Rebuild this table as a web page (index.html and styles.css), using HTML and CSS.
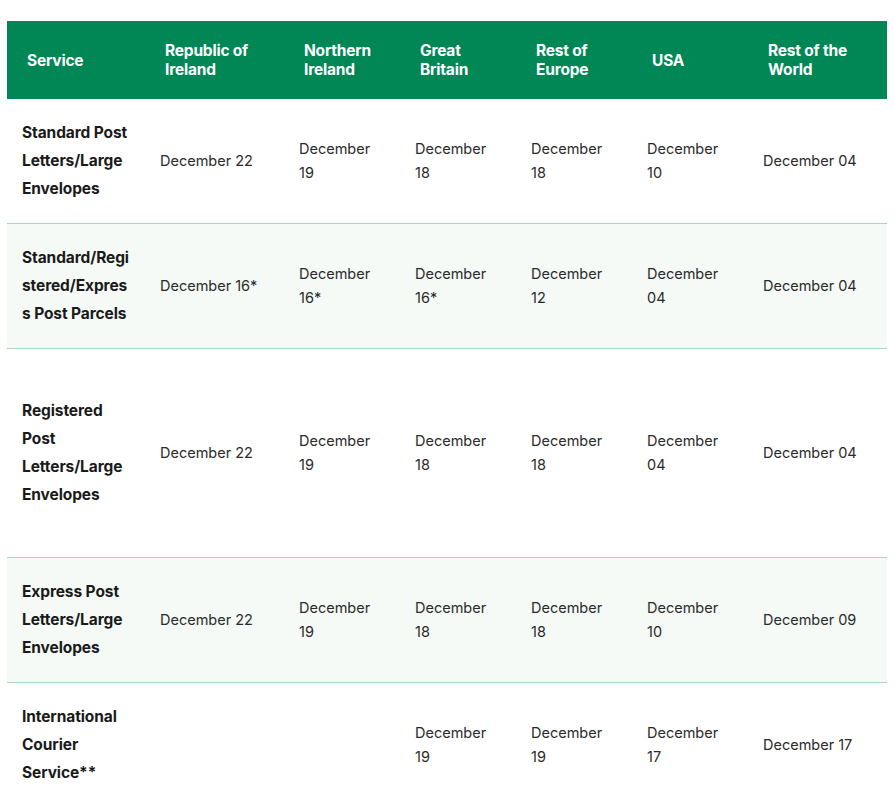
FILE: index.html
```html
<!DOCTYPE html>
<html lang="en">
<head>
<meta charset="utf-8">
<title>Christmas Posting Dates</title>
<link rel="stylesheet" href="styles.css">
</head>
<body>
<div class="wrap">
<table class="dates">
  <colgroup>
    <col class="c-service">
    <col class="c-wide">
    <col class="c-narrow">
    <col class="c-narrow">
    <col class="c-narrow">
    <col class="c-narrow">
    <col class="c-last">
  </colgroup>
  <thead>
    <tr>
      <th>Service</th>
      <th>Republic of Ireland</th>
      <th>Northern Ireland</th>
      <th>Great Britain</th>
      <th>Rest of Europe</th>
      <th>USA</th>
      <th>Rest of the World</th>
    </tr>
  </thead>
  <tbody>
    <tr>
      <td class="svc">Standard Post Letters/Large Envelopes</td>
      <td>December 22</td>
      <td>December 19</td>
      <td>December 18</td>
      <td>December 18</td>
      <td>December 10</td>
      <td>December 04</td>
    </tr>
    <tr class="alt">
      <td class="svc">Standard/Registered/Express Post Parcels</td>
      <td>December 16*</td>
      <td>December 16*</td>
      <td>December 16*</td>
      <td>December 12</td>
      <td>December 04</td>
      <td>December 04</td>
    </tr>
    <tr class="tall">
      <td class="svc">Registered Post Letters/Large Envelopes</td>
      <td>December 22</td>
      <td>December 19</td>
      <td>December 18</td>
      <td>December 18</td>
      <td>December 04</td>
      <td>December 04</td>
    </tr>
    <tr class="alt">
      <td class="svc">Express Post Letters/Large Envelopes</td>
      <td>December 22</td>
      <td>December 19</td>
      <td>December 18</td>
      <td>December 18</td>
      <td>December 10</td>
      <td>December 09</td>
    </tr>
    <tr>
      <td class="svc">International Courier Service**</td>
      <td></td>
      <td></td>
      <td>December 19</td>
      <td>December 19</td>
      <td>December 17</td>
      <td>December 17</td>
    </tr>
  </tbody>
</table>
</div>
</body>
</html>
```

FILE: styles.css
```css
html, body {
  margin: 0;
  padding: 0;
  background: #ffffff;
}

.wrap {
  padding: 21px 7px 0 7px;
}

.dates {
  width: 880px;
  table-layout: fixed;
  border-collapse: collapse;
  font-family: "Inter", "Open Sans", sans-serif;
  color: #222222;
}

.c-service { width: 138px; }
.c-wide { width: 139px; }
.c-narrow { width: 116px; }
.c-last { width: 139px; }

.dates thead tr {
  background: #008755;
}

.dates th {
  height: 78px;
  padding: 0 12px 0 20px;
  box-sizing: border-box;
  text-align: left;
  vertical-align: middle;
  color: #ffffff;
  font-weight: 700;
  font-size: 15.5px;
  line-height: 19px;
  letter-spacing: -0.2px;
}

.dates td {
  padding: 20px 15px;
  vertical-align: middle;
  font-size: 14.5px;
  line-height: 24px;
  font-weight: 400;
  color: #2a2a2a;
  overflow-wrap: anywhere;
  border-bottom: 1px solid #a8d8bf;
}

.dates td.svc {
  font-weight: 700;
  font-size: 15.5px;
  line-height: 28px;
  color: #1a1a1a;
  letter-spacing: -0.1px;
}

.dates tr.alt td {
  background: #f5faf7;
}

.dates tr.tall {
  height: 209px;
}
```
